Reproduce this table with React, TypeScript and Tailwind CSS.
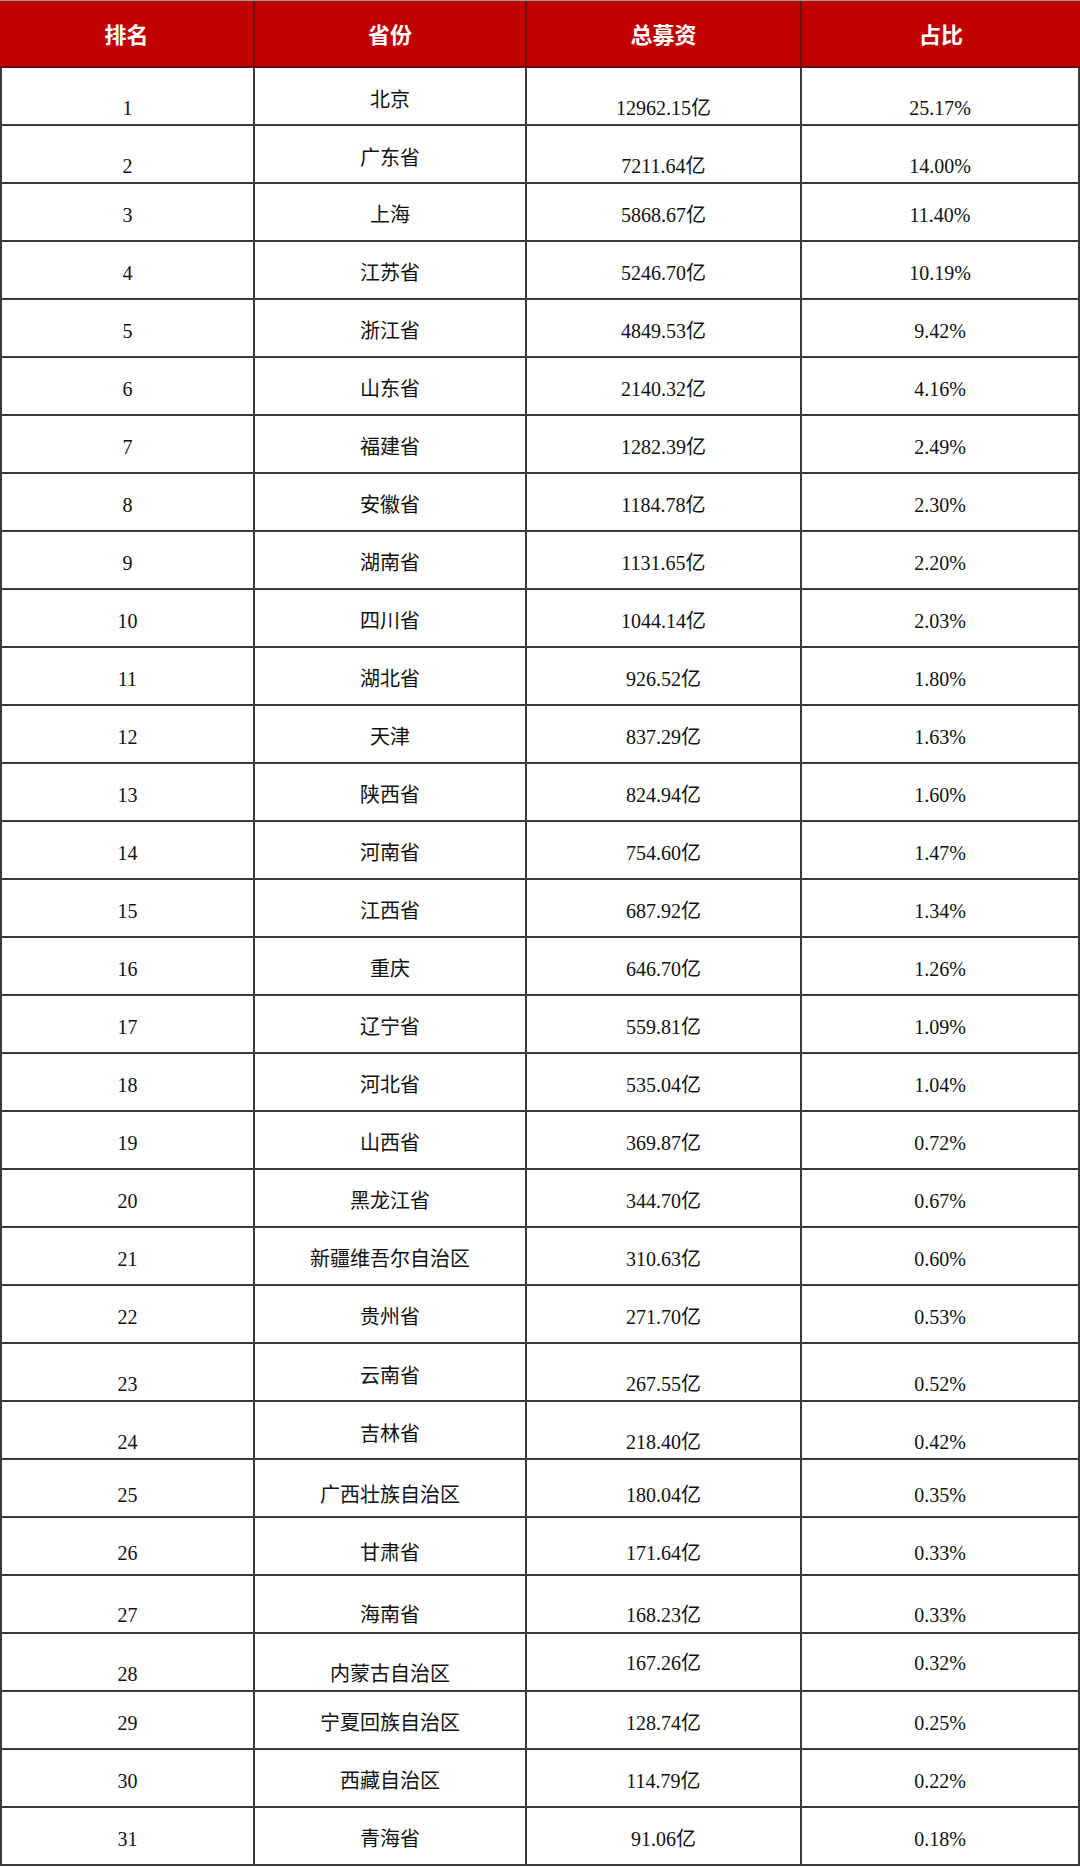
type Row = [string, string, string, string, string?];

// last field: how the row's text sits in its cells
// "a" = rank and figures low, province normal
// "b" = everything a bit low
// "c" = everything low
// "d" = rank and province low, figures normal
const rows: Row[] = [
  ["1", "北京", "12962.15亿", "25.17%", "a"],
  ["2", "广东省", "7211.64亿", "14.00%", "a"],
  ["3", "上海", "5868.67亿", "11.40%"],
  ["4", "江苏省", "5246.70亿", "10.19%"],
  ["5", "浙江省", "4849.53亿", "9.42%"],
  ["6", "山东省", "2140.32亿", "4.16%"],
  ["7", "福建省", "1282.39亿", "2.49%"],
  ["8", "安徽省", "1184.78亿", "2.30%"],
  ["9", "湖南省", "1131.65亿", "2.20%"],
  ["10", "四川省", "1044.14亿", "2.03%"],
  ["11", "湖北省", "926.52亿", "1.80%"],
  ["12", "天津", "837.29亿", "1.63%"],
  ["13", "陕西省", "824.94亿", "1.60%"],
  ["14", "河南省", "754.60亿", "1.47%"],
  ["15", "江西省", "687.92亿", "1.34%"],
  ["16", "重庆", "646.70亿", "1.26%"],
  ["17", "辽宁省", "559.81亿", "1.09%"],
  ["18", "河北省", "535.04亿", "1.04%"],
  ["19", "山西省", "369.87亿", "0.72%"],
  ["20", "黑龙江省", "344.70亿", "0.67%"],
  ["21", "新疆维吾尔自治区", "310.63亿", "0.60%"],
  ["22", "贵州省", "271.70亿", "0.53%"],
  ["23", "云南省", "267.55亿", "0.52%", "a"],
  ["24", "吉林省", "218.40亿", "0.42%", "a"],
  ["25", "广西壮族自治区", "180.04亿", "0.35%", "b"],
  ["26", "甘肃省", "171.64亿", "0.33%", "b"],
  ["27", "海南省", "168.23亿", "0.33%", "c"],
  ["28", "内蒙古自治区", "167.26亿", "0.32%", "d"],
  ["29", "宁夏回族自治区", "128.74亿", "0.25%"],
  ["30", "西藏自治区", "114.79亿", "0.22%"],
  ["31", "青海省", "91.06亿", "0.18%"],
];

const pad = (kind: string | undefined, col: number) => {
  if (kind === "a") return col === 1 ? "pt-[8px]" : "pt-[24px]";
  if (kind === "b") return "pt-[14px]";
  if (kind === "c") return "pt-[22px]";
  if (kind === "d") return col < 2 ? "pt-[24px]" : "pt-[2px]";
  return "pt-[6px]";
};

export default function App() {
  return (
    <div
      className="w-[1080px] h-[1868px] bg-white"
      style={{ fontFamily: '"Liberation Serif", "Noto Sans CJK SC", serif' }}
    >
      <div className="grid grid-cols-[255px_272px_275px_1fr] border-t border-[#9a9a9a]">
        {["排名", "省份", "总募资", "占比"].map((h, i) => (
          <div
            key={h}
            className={`h-[67px] bg-[#c00000] flex items-center justify-center text-white font-bold text-[22px] border-b-2 border-[#6a1010] ${i < 3 ? "border-r-2" : ""}`}
            style={{ fontFamily: '"Noto Sans CJK SC", sans-serif' }}
          >
            {h}
          </div>
        ))}
        {rows.map((r) =>
          [r[0], r[1], r[2], r[3]].map((cell, c) => (
            <div
              key={r[0] + "-" + c}
              className={`h-[58px] flex items-center justify-center text-[20px] text-[#111] border-b-2 border-r-2 border-[#3a3a3a] ${c === 0 ? "border-l-2" : ""} ${pad(r[4], c)}`}
            >
              {cell}
            </div>
          ))
        )}
      </div>
    </div>
  );
}
